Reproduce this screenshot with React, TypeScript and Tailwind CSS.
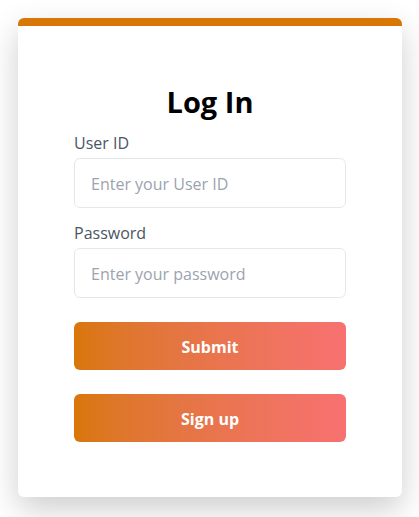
export default function App() {
  return (
    <div className="min-h-screen bg-white pl-[18px] pr-[17px] py-[18px] font-['Open_Sans',sans-serif]">
      <div className="bg-white rounded-md border-t-8 border-[#d97706] shadow-[0_12px_32px_rgba(0,0,0,0.2)] px-14 pt-[58px] pb-[55px]">
        <h1 className="text-center text-[29px] leading-9 font-bold text-black">Log In</h1>

        <form className="mt-[11px] flex flex-col" onSubmit={(e) => e.preventDefault()}>
          <label className="text-base leading-6 text-[#4b5563] mb-[3px]">User ID</label>
          <input
            type="text"
            placeholder="Enter your User ID"
            className="h-[50px] rounded-md border border-[#e5e7eb] px-4 pt-px text-base text-gray-700 placeholder:text-[#9ca3af] outline-none"
          />

          <label className="mt-[13px] text-base leading-6 text-[#4b5563] mb-[3px]">Password</label>
          <input
            type="password"
            placeholder="Enter your password"
            className="h-[50px] rounded-md border border-[#e5e7eb] px-4 pt-px text-base text-gray-700 placeholder:text-[#9ca3af] outline-none"
          />

          <button className="mt-6 h-12 pt-px rounded-md bg-gradient-to-r from-[#d97706] to-[#f87171] text-white font-bold text-base">
            Submit
          </button>
          <button type="button" className="mt-6 h-12 pt-px rounded-md bg-gradient-to-r from-[#d97706] to-[#f87171] text-white font-bold text-base">
            Sign up
          </button>
        </form>
      </div>
    </div>
  );
}
